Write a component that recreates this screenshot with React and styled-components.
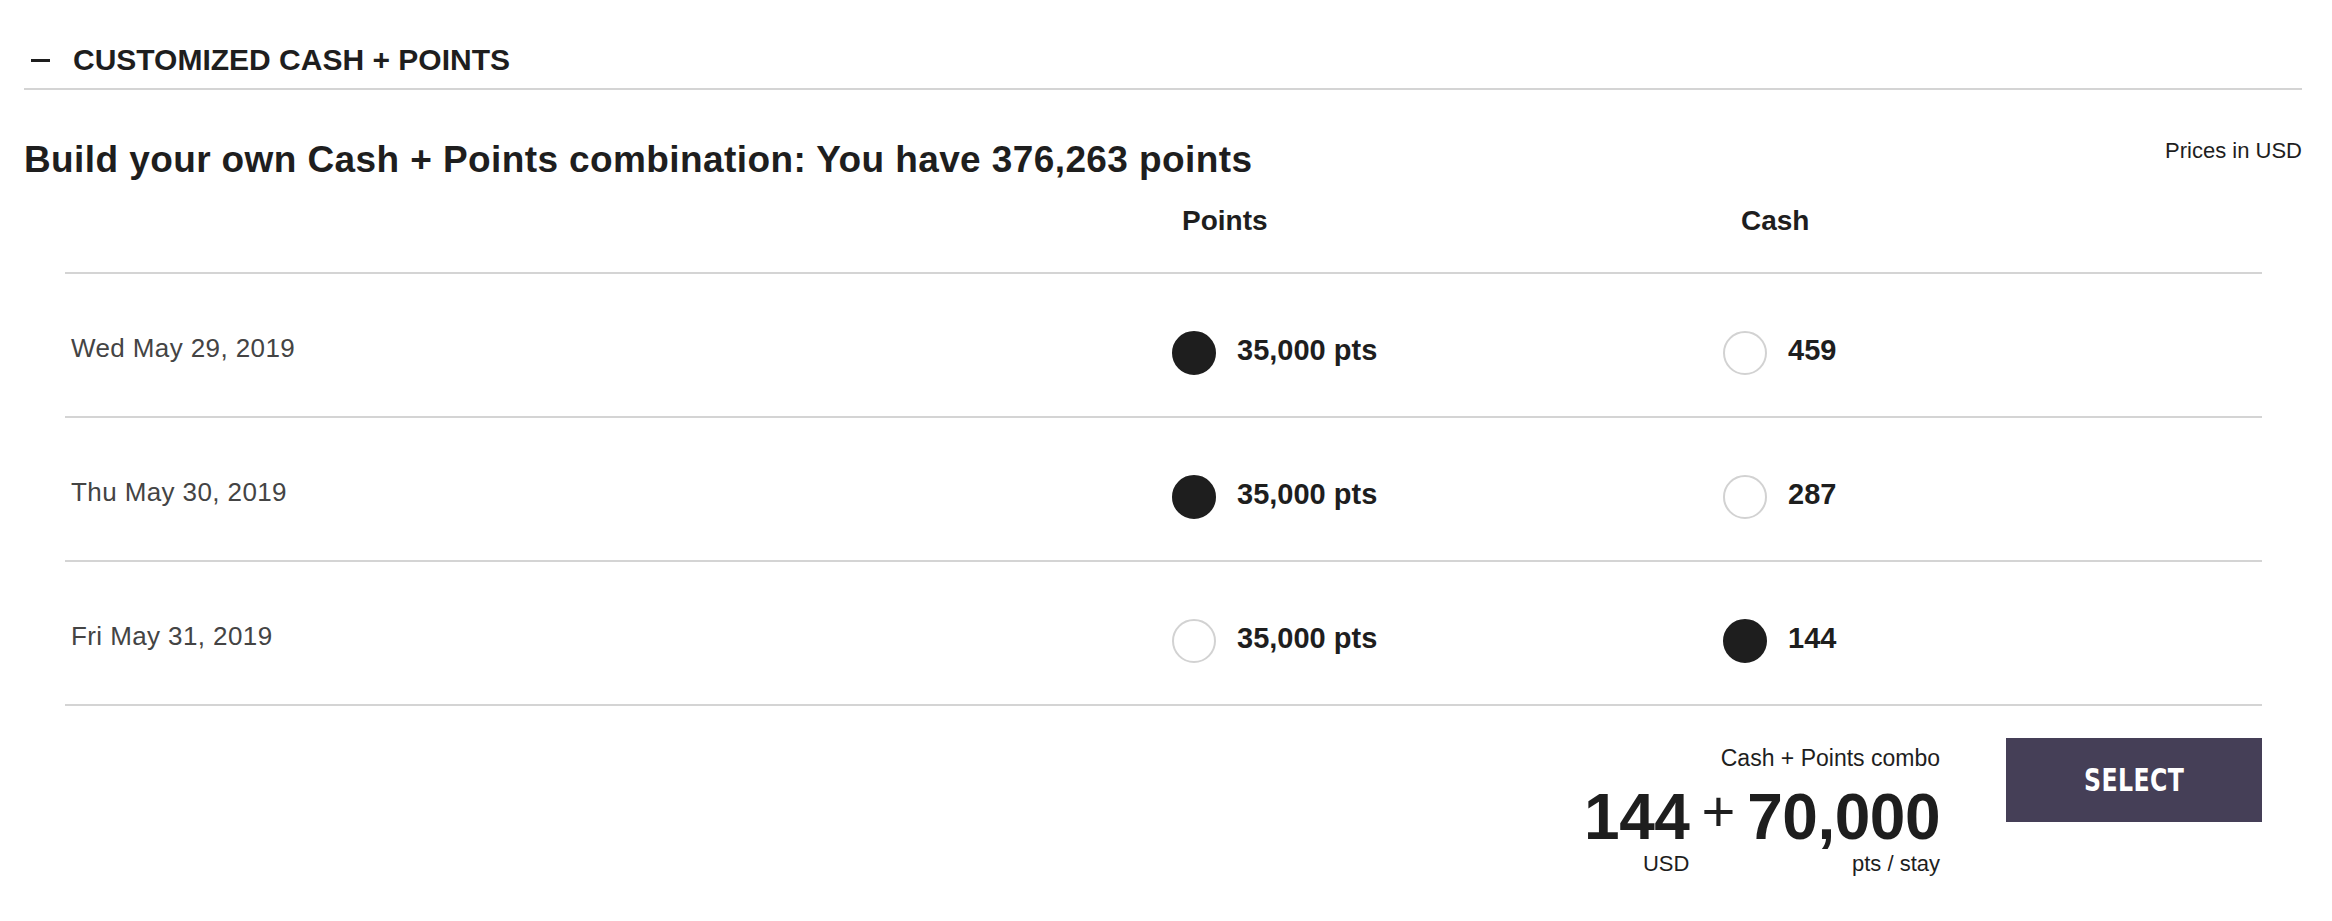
import styled, { createGlobalStyle } from "styled-components";

const GlobalStyle = createGlobalStyle`
  body {
    margin: 0;
    background: #fff;
  }
`;

const Page = styled.div`
  padding: 0 30px 0 24px;
  font-family: "Liberation Sans", Arial, sans-serif;
  color: #1e1e1e;
`;

const SectionHeader = styled.div`
  display: flex;
  align-items: center;
  gap: 23px;
  padding: 42px 0 10px 7px;
  border-bottom: 2px solid #d4d4d4;
  font-size: 30px;
  line-height: 36px;
  font-weight: 700;
`;

const Dash = styled.span`
  width: 19px;
  height: 3px;
  background: #1e1e1e;
`;

const TitleRow = styled.div`
  display: flex;
  justify-content: space-between;
  align-items: flex-start;
  margin-top: 48px;
`;

const Title = styled.h2`
  margin: 0;
  font-size: 37px;
  line-height: 44px;
  letter-spacing: 0.4px;
  font-weight: 700;
`;

const Note = styled.div`
  font-size: 22px;
  line-height: 26px;
`;

const Table = styled.div`
  margin: 0 40px 0 41px;
`;

const HeadRow = styled.div`
  display: grid;
  grid-template-columns: 1107px 551px 1fr;
  margin-top: 22px;
  padding-bottom: 34px;
  border-bottom: 2px solid #d4d4d4;
`;

const HeadCell = styled.div`
  font-size: 28px;
  line-height: 34px;
  font-weight: 700;
  padding-left: ${({ $indent }) => $indent || 0}px;
`;

const Row = styled.div`
  display: grid;
  grid-template-columns: 1107px 551px 1fr;
  align-items: center;
  height: 142px;
  border-bottom: 2px solid #d4d4d4;
`;

const DateCell = styled.div`
  padding: 6px 0 0 6px;
  font-size: 26px;
  line-height: 30px;
  letter-spacing: 0.4px;
  color: #444;
`;

const Choice = styled.label`
  display: flex;
  align-items: center;
  gap: 21px;
  padding-top: 16px;
  cursor: pointer;
`;

const Radio = styled.span`
  box-sizing: border-box;
  width: 44px;
  height: 44px;
  border-radius: 50%;
  border: 2px solid ${({ $checked }) => ($checked ? "#1e1e1e" : "#d2d2d2")};
  background: ${({ $checked }) => ($checked ? "#1e1e1e" : "#fff")};
`;

const Value = styled.span`
  font-size: 29px;
  line-height: 34px;
  font-weight: 700;
  margin-bottom: 6px;
`;

const Footer = styled.div`
  display: flex;
  justify-content: flex-end;
  align-items: flex-start;
  gap: 66px;
  padding-top: 32px;
`;

const Summary = styled.div`
  display: flex;
  flex-direction: column;
  align-items: flex-end;
  padding-top: 7px;
`;

const ComboLabel = styled.div`
  font-size: 23px;
  line-height: 26px;
`;

const Totals = styled.div`
  display: flex;
  align-items: flex-start;
  margin-top: 14px;
`;

const Amount = styled.div`
  display: flex;
  flex-direction: column;
  align-items: flex-end;
`;

const Big = styled.div`
  font-size: 64px;
  line-height: 64px;
  font-weight: 700;
  letter-spacing: -0.5px;
`;

const Unit = styled.div`
  margin-top: 3px;
  font-size: 22px;
  line-height: 24px;
`;

const Plus = styled.span`
  font-size: 58px;
  line-height: 52px;
  margin: 0 12px;
`;

const SelectButton = styled.button`
  width: 256px;
  height: 84px;
  padding: 0;
  border: none;
  background: #453f57;
  color: #fff;
  cursor: pointer;
`;

const SelectLabel = styled.span`
  display: inline-block;
  font-family: "DejaVu Sans Condensed", "DejaVu Sans", sans-serif;
  font-stretch: condensed;
  font-weight: 700;
  font-size: 32px;
  letter-spacing: 0.5px;
  transform: scaleX(0.82);
`;

const nights = [
  { date: "Wed May 29, 2019", points: "35,000 pts", cash: "459", pick: "points" },
  { date: "Thu May 30, 2019", points: "35,000 pts", cash: "287", pick: "points" },
  { date: "Fri May 31, 2019", points: "35,000 pts", cash: "144", pick: "cash" },
];

export default function App() {
  return (
    <Page>
      <GlobalStyle />
      <SectionHeader>
        <Dash />
        <span>CUSTOMIZED CASH + POINTS</span>
      </SectionHeader>

      <TitleRow>
        <Title>Build your own Cash + Points combination: You have 376,263 points</Title>
        <Note>Prices in USD</Note>
      </TitleRow>

      <Table>
        <HeadRow>
          <div />
          <HeadCell $indent={10}>Points</HeadCell>
          <HeadCell $indent={18}>Cash</HeadCell>
        </HeadRow>

        {nights.map((n) => (
          <Row key={n.date}>
            <DateCell>{n.date}</DateCell>
            <Choice>
              <Radio $checked={n.pick === "points"} />
              <Value>{n.points}</Value>
            </Choice>
            <Choice>
              <Radio $checked={n.pick === "cash"} />
              <Value>{n.cash}</Value>
            </Choice>
          </Row>
        ))}

        <Footer>
          <Summary>
            <ComboLabel>Cash + Points combo</ComboLabel>
            <Totals>
              <Amount>
                <Big>144</Big>
                <Unit>USD</Unit>
              </Amount>
              <Plus>+</Plus>
              <Amount>
                <Big>70,000</Big>
                <Unit>pts / stay</Unit>
              </Amount>
            </Totals>
          </Summary>
          <SelectButton>
            <SelectLabel>SELECT</SelectLabel>
          </SelectButton>
        </Footer>
      </Table>
    </Page>
  );
}
